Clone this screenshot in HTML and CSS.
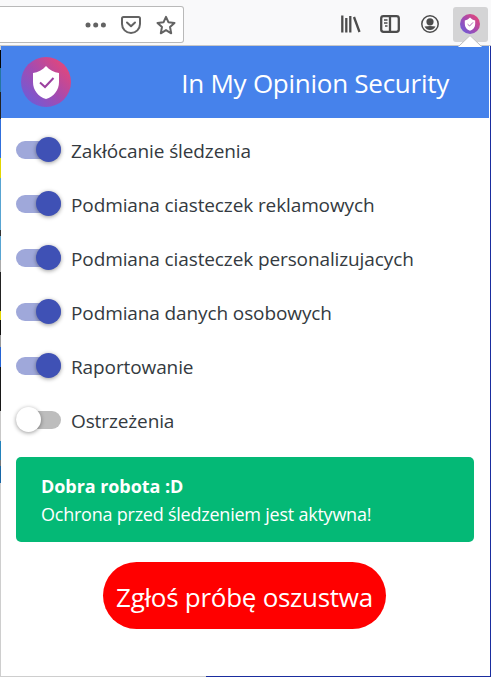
FILE: index.html
```html
<!DOCTYPE html>
<html lang="pl">
<head>
<meta charset="utf-8">
<title>In My Opinion Security</title>
<link rel="stylesheet" href="styles.css">
</head>
<body>
<svg class="defs" width="0" height="0" aria-hidden="true">
  <defs>
    <linearGradient id="brand" x1="0.1" y1="0.8" x2="0.8" y2="0.15">
      <stop offset="0" stop-color="#7659d2"/>
      <stop offset="0.5" stop-color="#a44bb0"/>
      <stop offset="1" stop-color="#da4782"/>
    </linearGradient>
    <symbol id="shield" viewBox="0 0 50 50">
      <circle cx="25" cy="25" r="25" fill="url(#brand)"/>
      <path d="M25 9C21.500 13 17 15.500 12 16V25C12 33 17 39.500 25 42C33 39.500 38 33 38 25V16C33 15.500 28.500 13 25 9Z" fill="#fff"/>
      <path d="M19 25.500L24 30L32.500 21" fill="none" stroke="#9c419f" stroke-width="2"/>
    </symbol>
  </defs>
</svg>
<header class="toolbar">
  <div class="urlbar">
    <svg class="dots" width="22" height="6" viewBox="0 0 22 6"><circle cx="3" cy="3" r="2.500"/><circle cx="10.700" cy="3" r="2.500"/><circle cx="18.400" cy="3" r="2.500"/></svg>
    <svg class="pocket" width="20" height="18" viewBox="0 0 20 18"><path d="M2.500 1H17.500Q19 1 19 2.500V8A9 9 0 0 1 1 8V2.500Q1 1 2.500 1ZM6 6.500L10 10.300L14 6.500"/></svg>
    <svg class="star" width="20" height="20" viewBox="0 0 20 20"><path d="M10 1.800L12.400 7.200L18.500 7.900L14 11.900L15.200 18.300L10 15.100L4.800 18.300L6 11.900L1.500 7.900L7.600 7.200Z"/></svg>
  </div>
  <div class="tools">
    <svg class="library" width="20" height="18" viewBox="0 0 20 18"><path d="M1.300 .5V17.500M5.300 3V17.500M9.300 1V17.500M13 2L18.500 17"/></svg>
    <svg class="sidebar" width="20" height="18" viewBox="0 0 20 18"><rect x="1.200" y="1.200" width="17.600" height="15.600" rx="2.300"/><path d="M10 1V17"/><path class="thin" d="M4 5H7.500M4 8H7.500M5 11H7.500"/></svg>
    <svg class="account" width="18" height="18" viewBox="0 0 18 18"><circle cx="9" cy="9" r="8.200"/><circle class="solid" cx="9" cy="6.800" r="3.600"/><path class="solid" d="M3.500 11.500Q9 10.500 14.500 11.500Q12.500 15 9 15T3.500 11.500Z"/></svg>
    <div class="extension"><svg width="20" height="20"><use href="#shield"/></svg></div>
  </div>
</header>
<main class="popup">
  <div class="banner">
    <svg class="logo" width="50" height="50"><use href="#shield"/></svg>
    <h1>In My Opinion Security</h1>
  </div>
  <div class="settings">
    <div class="row"><span class="switch on"></span><span class="label">Zakłócanie śledzenia</span></div>
    <div class="row"><span class="switch on"></span><span class="label">Podmiana ciasteczek reklamowych</span></div>
    <div class="row"><span class="switch on"></span><span class="label">Podmiana ciasteczek personalizujacych</span></div>
    <div class="row"><span class="switch on"></span><span class="label">Podmiana danych osobowych</span></div>
    <div class="row"><span class="switch on"></span><span class="label">Raportowanie</span></div>
    <div class="row"><span class="switch"></span><span class="label">Ostrzeżenia</span></div>
  </div>
  <div class="status">
    <strong>Dobra robota :D</strong>
    <span>Ochrona przed śledzeniem jest aktywna!</span>
  </div>
  <button class="report"><span>Zgłoś próbę oszustwa</span></button>
</main>
<svg class="pointer" width="24" height="12" viewBox="0 0 24 12"><path d="M0 12L12 0L24 12Z" fill="#fff"/><path d="M1 11L12 .5L23 11" fill="none" stroke="#bbb"/></svg>
<div class="page-edge"></div>
<div class="page-bottom"></div>
</body>
</html>
```

FILE: styles.css
```css
* { box-sizing: border-box; }
body {
  position: relative;
  margin: 0;
  width: 491px;
  height: 677px;
  overflow: hidden;
  background: #fff;
  color: #343a40;
  font-family: "Open Sans", sans-serif;
}
svg { display: block; flex: none; }
.defs { position: absolute; }
.toolbar {
  display: flex;
  justify-content: space-between;
  height: 46px;
  background: #f9f9fa;
  border-bottom: 1px solid #c8c8c8;
}
.urlbar {
  display: flex;
  align-items: center;
  justify-content: flex-end;
  width: 184px;
  height: 37px;
  margin-top: 6px;
  padding-right: 7px;
  background: #fff;
  border: 1px solid #b9b9b9;
  border-left: 0;
  border-radius: 0 3px 3px 0;
}
.dots { margin-right: 14px; fill: #636363; }
.pocket { margin-right: 15px; }
.pocket, .star { fill: none; stroke: #636363; stroke-width: 2; stroke-linejoin: round; stroke-linecap: round; }
.tools { display: flex; align-items: center; padding: 3px 3px 0 0; }
.library, .sidebar, .account { fill: none; stroke: #4c4c4c; stroke-width: 2.3; }
.library { margin-right: 19px; }
.sidebar { margin-right: 21px; }
.account { margin-right: 14px; stroke-width: 1.5; }
.thin { stroke-width: 1.3; }
.solid { fill: #4c4c4c; stroke: none; }
.extension {
  display: grid;
  place-items: center;
  width: 35px;
  height: 35px;
  padding-right: 1px;
  background: #d4d4d5;
  border-radius: 3px;
}
.popup {
  height: 631px;
  border-left: 1px solid #cecece;
  border-right: 1px solid #1a2d9f;
  border-bottom: 1px solid #1a2d9f;
}
.banner {
  display: flex;
  align-items: center;
  justify-content: space-between;
  width: 488px;
  height: 72px;
  padding: 0 40px 0 20px;
  background: #4682eb;
  color: #fff;
}
.banner h1 { margin: 1px 0 0; font-size: 26px; font-weight: 400; line-height: 36px; letter-spacing: -.26px; white-space: nowrap; }
.settings { padding: 4px 15px 0; }
.row { display: flex; align-items: center; height: 54px; }
.switch {
  position: relative;
  flex: none;
  width: 45px;
  height: 18px;
  margin-top: 1px;
  border-radius: 9px;
  background: #bdbdbd;
}
.switch::after {
  content: "";
  position: absolute;
  top: -4px;
  left: 0;
  width: 25px;
  height: 25px;
  border-radius: 50%;
  background: #fff;
  box-shadow: 0 1px 4px rgba(0, 0, 0, .4);
}
.switch.on { background: #9fa8da; }
.switch.on::after { left: 20px; background: #3f51b5; }
.label { margin: 4px 0 0 10px; font-size: 19px; line-height: 28px; letter-spacing: -.11px; white-space: nowrap; }
.status {
  display: flex;
  flex-direction: column;
  width: 458px;
  height: 85px;
  margin: 11px 0 0 15px;
  padding: 15px 25px;
  border-radius: 5px;
  background: #04b976;
  color: #fff;
  font-size: 18px;
  line-height: 28px;
  white-space: nowrap;
}
.status span, .status strong { align-self: flex-start; }
.status span { letter-spacing: -.23px; }
.status strong { letter-spacing: -.07px; }
.report {
  display: grid;
  place-items: center;
  width: 283px;
  height: 67px;
  margin: 20px 0 0 102px;
  padding: 2px 0 0;
  border: 0;
  border-radius: 34px;
  background: #f00;
  color: #fff;
  font-family: inherit;
  font-size: 26px;
  letter-spacing: -.27px;
  white-space: nowrap;
}
.pointer { position: absolute; left: 458px; top: 35px; }
.page-edge {
  position: absolute;
  left: 0;
  top: 50px;
  width: 1px;
  height: 433px;
  background: linear-gradient(#050505 0 18px, #2575a0 18px 42px, #222 42px 69px, #316fdc 69px 108px, #e3d600 108px 128px, #58a4d2 128px 180px, #333 180px 186px, #58a4d2 186px 210px, #aaa 210px 222px, #222 222px 261px, #e3d600 261px 270px, #111 270px 285px, #999 285px 297px, #2463d4 297px 317px, #181818 317px 361px, #c7c7c7 361px 391px, #2382bb 391px 410px, #777 410px 416px, #1766a6 416px);
}
.page-bottom { position: absolute; left: 0; bottom: 0; width: 206px; height: 1px; background: #cecece; }
```
